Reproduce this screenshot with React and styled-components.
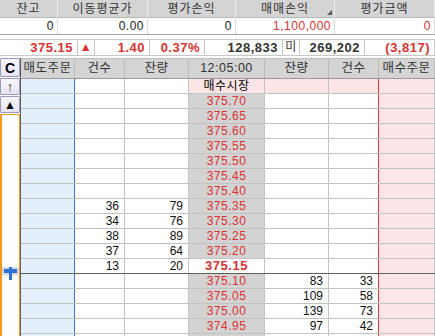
import React from 'react';
import styled, { createGlobalStyle } from 'styled-components';

const GlobalStyle = createGlobalStyle`
  html, body {
    margin: 0;
    padding: 0;
    background: #ffffff;
    overflow: hidden;
  }
  body {
    font-family: "Liberation Sans", "Noto Sans CJK KR", sans-serif;
    font-size: 12px;
    color: #111;
  }
`;

const RED = '#dc3232';
const GRID_LINE = '#c3c3c3';
const HEAD_BG = '#d4d4d4';

const SUMMARY_COLS = [
  { label: '잔고', value: '0' },
  { label: '이동평균가', value: '0.00' },
  { label: '평가손익', value: '0' },
  { label: '매매손익', value: '1,100,000', red: true, corner: true },
  { label: '평가금액', value: '0', red: true },
];

const QUOTE = [
  { text: '375.15', red: true, bold: true },
  { text: '▲', red: true, center: true },
  { text: '1.40', red: true, bold: true },
  { text: '0.37%', red: true, bold: true },
  { text: '128,833', bold: true },
  { text: '미', center: true },
  { text: '269,202', bold: true },
  { text: '(3,817)', red: true, bold: true },
];

const ASKS = [
  ['375.70'], ['375.65'], ['375.60'], ['375.55'], ['375.50'], ['375.45'], ['375.40'],
  ['375.35', '36', '79'], ['375.30', '34', '76'], ['375.25', '38', '89'],
  ['375.20', '37', '64'], ['375.15', '13', '20', true],
];

const BIDS = [
  ['375.10', '83', '33'], ['375.05', '109', '58'], ['375.00', '139', '73'],
  ['374.95', '97', '42'], ['374.90', '107', '46'],
];

const Page = styled.div`
  width: 435px;
  height: 336px;
  overflow: hidden;
`;

const Summary = styled.div`
  display: grid;
  grid-template-columns: 58px 90px 88px 99px 100px;
  border-bottom: 1px solid #a8a8a8;
  margin-bottom: 4px;
`;

const SumHead = styled.div`
  position: relative;
  height: 18px;
  line-height: 18px;
  background: ${HEAD_BG};
  color: #333;
  text-align: center;
  letter-spacing: 1px;
  border-right: 1px solid #ececec;
  border-bottom: 1px solid #b8b8b8;
  box-sizing: border-box;
`;

const Corner = styled.span`
  position: absolute;
  right: 2px;
  bottom: 2px;
  width: 0;
  height: 0;
  border-left: 5px solid transparent;
  border-bottom: 5px solid #555;
`;

const SumValue = styled.div`
  height: 16px;
  line-height: 16px;
  padding-right: 3px;
  text-align: right;
  color: ${(p) => (p.red ? RED : '#222')};
  border-right: 1px solid #dcdcdc;
  letter-spacing: 0.5px;
`;

const QuoteRow = styled.div`
  display: grid;
  grid-template-columns: 78px 17px 55px 55px 78px 17px 65px 70px;
  border-top: 1px solid #c8c8c8;
  border-bottom: 1px solid #c8c8c8;
  margin-bottom: 2px;
`;

const QuoteCell = styled.div`
  height: 15px;
  line-height: 15px;
  padding: 0 4px;
  text-align: ${(p) => (p.center ? 'center' : 'right')};
  font-size: ${(p) => (p.bold ? '13px' : '12px')};
  font-weight: ${(p) => (p.bold ? 700 : 400)};
  color: ${(p) => (p.red ? RED : '#333')};
  border-right: 1px solid #c8c8c8;
  letter-spacing: 0.5px;
  ${(p) => p.center && 'padding: 0;'}
`;

const Main = styled.div`
  display: flex;
`;

const Side = styled.div`
  width: 20px;
  display: flex;
  flex-direction: column;
  gap: 1px;
  flex-shrink: 0;
`;

const SideButton = styled.div`
  height: ${(p) => p.h}px;
  box-sizing: border-box;
  border: 1px solid #9d98bd;
  border-radius: 1px;
  background: linear-gradient(#f7f6fc, #e6e4f2);
  display: flex;
  align-items: center;
  justify-content: center;
  font-weight: ${(p) => (p.bold ? 700 : 400)};
  font-size: ${(p) => p.fs || 13}px;
  color: #000;
`;

const OrangeBox = styled.div`
  flex: 1;
  border: 1px solid #f39a1c;
  border-left-width: 2px;
  background: #fff;
  min-height: 230px;
`;

const Marker = styled.div`
  margin-top: 152px;
  height: 13px;
  position: relative;
`;

const MarkerStrip = styled.div`
  margin-top: 5px;
  height: 8px;
  background: #ddd6f0;
`;

const PlusH = styled.span`
  position: absolute;
  left: 2px;
  top: 2px;
  width: 13px;
  height: 4px;
  background: #2f72d6;
`;

const PlusV = styled.span`
  position: absolute;
  left: 7px;
  top: 0;
  width: 3px;
  height: 13px;
  background: #2f72d6;
`;

const Board = styled.div`
  width: 415px;
  border-left: 1px solid #5f5f5f;
  box-sizing: border-box;
`;

const BOARD_COLS = '54px 50px 64px 76px 64px 50px 56px';

const HeadRow = styled.div`
  display: grid;
  grid-template-columns: ${BOARD_COLS};
  height: 21px;
  background: ${HEAD_BG};
  border-top: 1px solid #bdbdbd;
  border-bottom: 1px solid #9a9a9a;
  box-sizing: border-box;
`;

const HeadCell = styled.div`
  line-height: 19px;
  font-size: 12.5px;
  text-align: center;
  color: #333;
  letter-spacing: 0.5px;
  border-right: 1px solid #bcbcbc;
  white-space: nowrap;
  overflow: hidden;
`;

const Row = styled.div`
  display: grid;
  grid-template-columns: ${BOARD_COLS};
  height: 15px;
  box-sizing: border-box;
  border-bottom: 1px solid ${(p) => (p.divider ? '#5f5f5f' : GRID_LINE)};
`;

const Cell = styled.div`
  line-height: 14px;
  padding-right: 5px;
  text-align: right;
  color: #111;
  background: ${(p) => p.bg || '#fff'};
  border-right: 1px solid ${(p) => p.edge || GRID_LINE};
  overflow: hidden;
`;

const PriceCell = styled.div`
  line-height: 14px;
  text-align: center;
  background: ${(p) => (p.current ? '#fff' : p.market ? '#fde5e7' : '#d3d3d3')};
  color: ${(p) => (p.market ? '#000' : RED)};
  font-weight: ${(p) => (p.current ? 700 : 400)};
  font-size: ${(p) => (p.current ? '13px' : '12px')};
  letter-spacing: 0.5px;
  border-right: 1px solid ${GRID_LINE};
`;

const SELL_BG = '#e3effb';
const BUY_BG = '#fce5e7';

const App = () => {
  return (
    <Page>
      <GlobalStyle />
      <Summary>
        {SUMMARY_COLS.map((c) => (
          <SumHead key={c.label}>
            {c.label}
            {c.corner && <Corner />}
          </SumHead>
        ))}
        {SUMMARY_COLS.map((c) => (
          <SumValue key={c.label} red={c.red}>
            {c.value}
          </SumValue>
        ))}
      </Summary>

      <QuoteRow>
        {QUOTE.map((q, i) => (
          <QuoteCell key={i} red={q.red} bold={q.bold} center={q.center}>
            {q.text}
          </QuoteCell>
        ))}
      </QuoteRow>

      <Main>
        <Side>
          <SideButton h={19} bold fs={14}>C</SideButton>
          <SideButton h={17}>↑</SideButton>
          <SideButton h={17} fs={12}>▲</SideButton>
          <OrangeBox>
            <Marker>
              <MarkerStrip />
              <PlusH />
              <PlusV />
            </Marker>
          </OrangeBox>
        </Side>

        <Board>
          <HeadRow>
            <HeadCell>매도주문</HeadCell>
            <HeadCell>건수</HeadCell>
            <HeadCell>잔량</HeadCell>
            <HeadCell>12:05:00</HeadCell>
            <HeadCell>잔량</HeadCell>
            <HeadCell>건수</HeadCell>
            <HeadCell>매수주문</HeadCell>
          </HeadRow>

          <Row>
            <Cell bg={SELL_BG} edge="#3a78d6" />
            <Cell />
            <Cell />
            <PriceCell market>매수시장</PriceCell>
            <Cell bg={BUY_BG} />
            <Cell bg={BUY_BG} edge="#e03a3a" />
            <Cell bg={BUY_BG} />
          </Row>

          {ASKS.map(([price, count, qty, current]) => (
            <Row key={price} divider={current}>
              <Cell bg={SELL_BG} edge="#3a78d6" />
              <Cell>{count}</Cell>
              <Cell>{qty}</Cell>
              <PriceCell current={current}>{price}</PriceCell>
              <Cell />
              <Cell edge="#e03a3a" />
              <Cell bg={BUY_BG} />
            </Row>
          ))}

          {BIDS.map(([price, qty, count]) => (
            <Row key={price}>
              <Cell bg={SELL_BG} edge="#3a78d6" />
              <Cell />
              <Cell />
              <PriceCell>{price}</PriceCell>
              <Cell>{qty}</Cell>
              <Cell edge="#e03a3a">{count}</Cell>
              <Cell bg={BUY_BG} />
            </Row>
          ))}
        </Board>
      </Main>
    </Page>
  );
};

export default App;
